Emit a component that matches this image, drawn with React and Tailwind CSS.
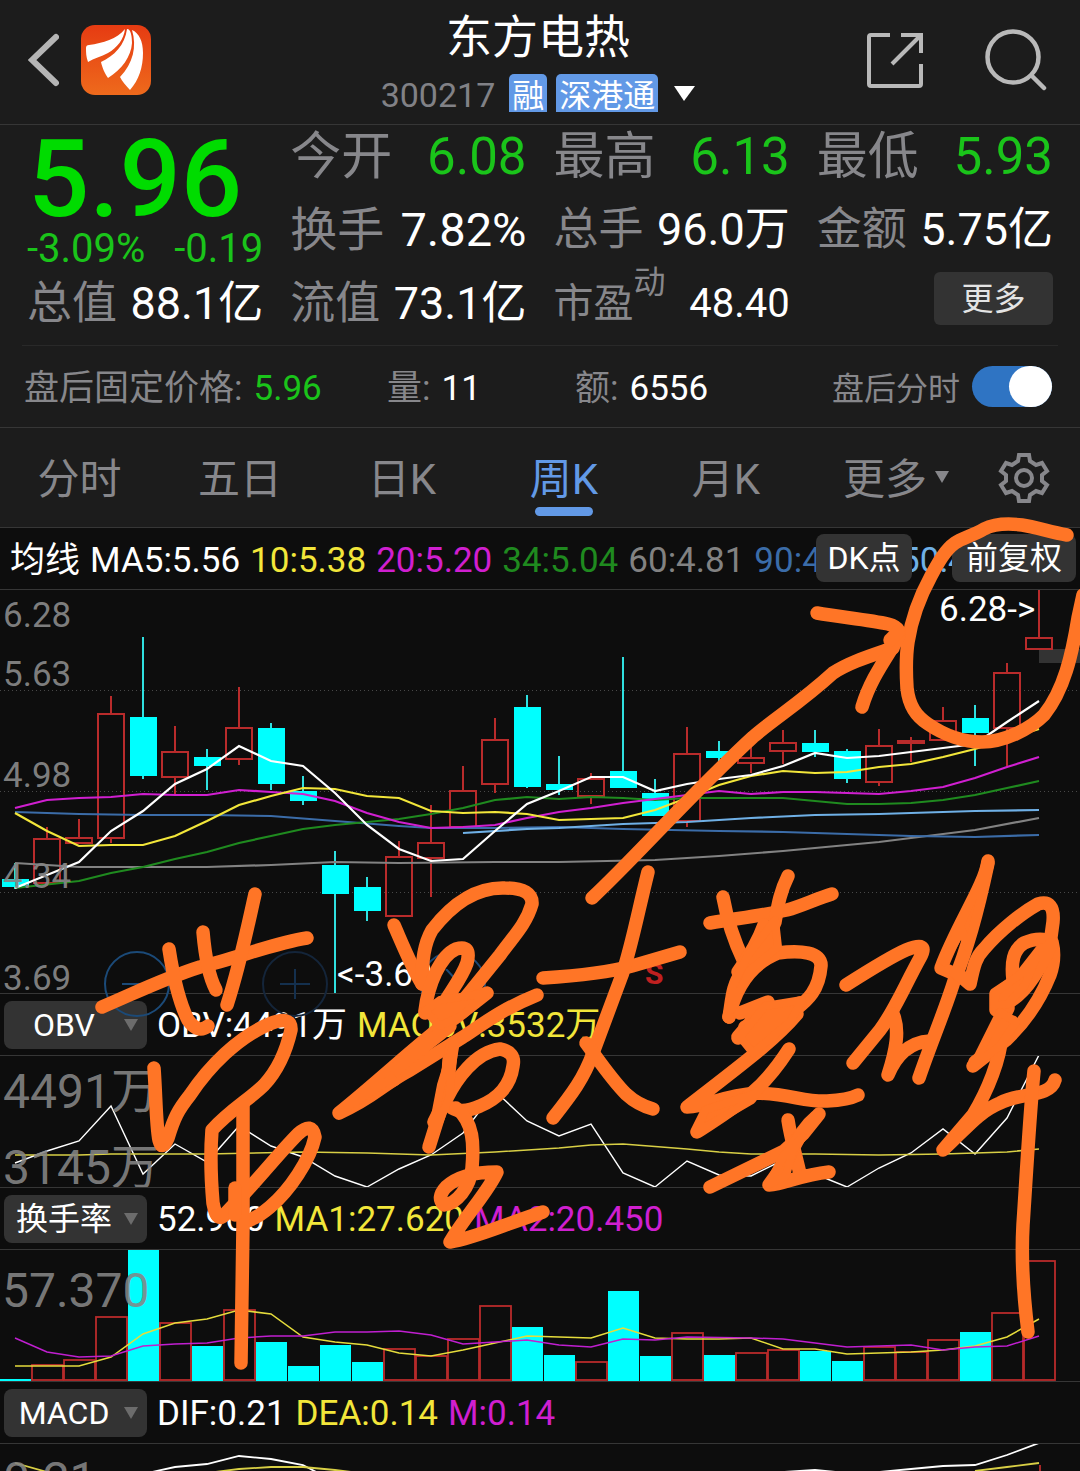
import React, { useState } from 'react';

const RED = '#b92b2b';
const CYAN = '#00ffff';

// [type, body top, body bottom, wick top, wick bottom]
const CANDLES = [
  ['d', 879, 887, 863, 889], ['u', 839, 883, 827, 886], ['u', 838, 843, 819, 843], ['u', 714, 838, 696, 843],
  ['d', 717, 776, 637, 779], ['u', 752, 777, 726, 795], ['d', 757, 766, 749, 790], ['u', 728, 759, 687, 765],
  ['d', 728, 784, 723, 790], ['d', 791, 801, 776, 805], ['d', 865, 894, 851, 993], ['d', 887, 911, 877, 921],
  ['u', 857, 916, 841, 916], ['u', 843, 858, 805, 897], ['u', 791, 827, 766, 827], ['u', 740, 784, 718, 793],
  ['d', 707, 787, 695, 788], ['d', 784, 790, 756, 795], ['u', 779, 796, 773, 804], ['d', 771, 788, 657, 788],
  ['d', 793, 816, 779, 816], ['u', 754, 821, 727, 827], ['d', 751, 758, 741, 762], ['u', 758, 763, 747, 773],
  ['u', 743, 751, 730, 764], ['d', 743, 752, 730, 757], ['d', 751, 779, 749, 783], ['u', 746, 782, 729, 786],
  ['u', 741, 743, 737, 762], ['u', 721, 740, 707, 740], ['d', 718, 733, 705, 766], ['u', 673, 728, 663, 766],
  ['u', 638, 649, 589, 649],
];

const MA_LINES = [
  { color: '#828282', points: '15,863 79,867 207,867 271,865 335,862 399,863 495,862 559,862 655,860 719,856 783,851 815,848 879,842 975,830 1039,818' },
  { color: '#3b6ca8', points: '15,812 79,814 143,815 207,815 271,816 335,821 399,826 431,828 495,828 559,827 623,829 719,831 783,832 847,834 911,836 975,837 1039,835' },
  { color: '#6fb0e6', points: '463,833 527,829 559,828 623,824 687,822 719,820 751,818 815,815 879,814 975,811 1039,810' },
  { color: '#1f8a1f', points: '15,888 79,881 111,873 143,867 175,859 207,852 239,843 271,836 303,829 335,825 367,822 399,819 431,814 463,808 495,800 527,797 559,799 591,797 623,798 655,800 687,798 783,798 847,804 879,804 911,803 943,800 975,795 1007,788 1039,781' },
  { color: '#d01fd0', points: '15,808 47,800 79,798 111,797 143,794 175,795 207,795 239,790 271,792 303,794 335,801 367,813 399,822 431,828 463,827 495,825 527,818 559,812 591,808 623,803 655,799 687,795 719,791 751,794 783,792 815,792 847,793 879,794 911,791 943,787 975,778 1007,767 1039,757' },
  { color: '#f2e63a', points: '15,813 47,831 79,846 111,845 143,845 175,836 207,821 239,805 271,796 303,788 335,789 367,796 399,798 431,811 463,813 495,812 527,814 559,820 591,819 623,818 655,810 687,798 719,785 751,776 783,771 815,773 847,772 879,767 911,764 943,757 975,749 1007,739 1039,729' },
  { color: '#ffffff', points: '15,888 47,875 79,862 111,831 143,811 175,784 207,769 239,746 271,761 303,766 335,793 367,825 399,849 431,861 463,859 495,831 527,804 559,791 591,777 623,777 655,791 687,784 719,779 751,775 783,766 815,753 847,758 879,756 911,752 943,748 975,744 1007,722 1039,701' },
];

// [type, top]
const TURNOVER = [
  ['d', 1379], ['u', 1365], ['u', 1360], ['u', 1317], ['d', 1250], ['u', 1323], ['d', 1346], ['u', 1310], ['d', 1342],
  ['d', 1366], ['d', 1345], ['d', 1362], ['u', 1349], ['u', 1356], ['u', 1339], ['u', 1306], ['d', 1327], ['d', 1355],
  ['u', 1362], ['d', 1291], ['d', 1356], ['u', 1333], ['d', 1355], ['u', 1353], ['u', 1350], ['d', 1351], ['d', 1361],
  ['u', 1347], ['u', 1352], ['u', 1340], ['d', 1332], ['u', 1313], ['u', 1261],
];

const INK = [
  // circle round the latest candle
  'M1067 535 C1050 532 1036 527 1022 525 C1006 523 994 524 984 529 C972 536 962 538 955 543 C945 550 938 563 931 576 C919 598 911 622 908 642 C906 655 906 672 907 688 C909 706 916 716 928 724 C944 735 964 742 982 742 C1004 742 1030 729 1044 715 C1064 690 1072 655 1078 618 L1083 595',
  // arrow
  'M592 898 C635 858 690 795 753 737 C775 718 800 703 833 673 C850 662 870 656 893 648',
  'M817 613 C840 617 870 620 888 624 Q904 628 897 640 C885 660 870 680 862 707',
  'M890 640 L898 632',
  // 带
  'M102 1007 C135 993 165 978 200 967 C240 957 275 943 307 938',
  'M169 949 C173 975 178 1000 188 1020 Q198 1034 208 1026',
  'M203 932 C205 955 209 977 216 990',
  'M255 894 C248 925 240 965 227 1005',
  'M154 1068 C156 1095 156 1125 159 1140 Q162 1152 168 1138 C174 1118 178 1110 190 1095 C210 1065 238 1038 267 1025 Q292 1014 291 1030 C286 1052 278 1070 264 1085 C250 1099 230 1110 212 1130 C210 1155 211 1180 213 1203 Q217 1226 227 1212 L243 1195 C262 1175 280 1152 298 1134 Q312 1121 315 1137 C310 1160 290 1190 270 1207 Q256 1219 244 1222',
  'M243 1104 L243 1225 L241 1363',
  'M235 1188 L235 1215',
  // 量
  'M394 925 C404 948 412 968 422 984',
  'M422 984 C422 960 424 944 432 930 C452 904 476 887 505 888 Q533 888 532 904 C526 925 512 938 500 955 L462 1002',
  'M425 1011 C428 985 440 956 456 949 Q472 944 467 963 C462 978 448 995 440 1010',
  'M425 1013 L445 1008 L487 993 L455 1018 L440 1026',
  'M440 1022 L463 1008',
  'M450 1020 C420 1042 380 1080 339 1113 C375 1097 380 1086 410 1070 L463 1037 C490 1019 505 1008 537 995',
  'M450 1026 C420 1050 390 1072 360 1098 L395 1079',
  'M453 1043 C448 1070 446 1090 439 1115 L429 1147',
  'M449 1060 L447 1096 L434 1122',
  'M447 1098 C456 1080 475 1052 500 1049 Q516 1052 513 1066 C510 1088 495 1100 480 1106 Q462 1114 452 1108',
  'M456 1108 C474 1122 474 1145 472 1168 C470 1188 456 1204 444 1205 Q436 1198 446 1187 C460 1174 480 1172 497 1172 C488 1192 466 1215 450 1242 C475 1238 500 1226 543 1212',
  // 大
  'M543 978 C575 976 610 972 632 966 L680 952',
  'M648 872 C638 912 632 945 622 975 L593 1053 C584 1078 572 1094 553 1118',
  'M586 1043 C600 1062 612 1080 626 1094 Q638 1105 653 1109',
  // 墓
  'M710 923 C740 918 765 915 787 910 C802 906 818 898 832 894',
  'M723 897 C728 925 736 945 744 962',
  'M788 876 C780 892 778 905 775 922 C766 945 752 960 742 972 C732 985 732 1000 729 1017',
  'M764 925 C758 942 748 958 738 972',
  'M729 1017 C735 990 748 965 778 953 C800 950 822 952 821 966 C819 990 808 1000 795 1010',
  'M740 1013 L768 1002 L738 1037 L800 1003 L780 1028 L738 1038',
  'M745 1027 L795 1012',
  'M797 1014 C775 1040 745 1062 687 1107 C710 1106 720 1096 757 1093 C790 1094 805 1102 827 1101 Q848 1100 858 1095',
  'M789 1049 C778 1066 765 1082 752 1093 C735 1108 715 1120 697 1132 L707 1112 L735 1103',
  'M703 1122 L742 1100',
  'M788 1120 C791 1140 796 1155 800 1174',
  'M819 1114 L803 1134 L784 1151 L710 1187',
  'M816 1117 C800 1130 796 1145 787 1160 L769 1185 C785 1184 800 1175 829 1172',
  // 碑
  'M846 985 C868 971 890 957 906 950 Q930 940 920 958 C905 985 895 1010 880 1030 L853 1063',
  'M893 1014 C900 1030 896 1050 888 1075 C895 1058 908 1042 930 1041',
  'M988 861 C985 885 957 925 941 968 L955 974',
  'M988 863 C978 910 965 955 955 978 C946 1008 932 1040 919 1078',
  'M956 972 L970 984 C974 965 976 957 984 949 C1000 930 1022 913 1038 904 Q1055 899 1053 922 L1050 944',
  'M1013 980 C1011 962 1013 950 1024 943 Q1040 936 1052 942 Q1056 958 1050 975 C1040 1000 1025 1022 1006 1040 L973 1066',
  'M1051 945 C1040 968 1028 990 1012 1000 L996 1010 L996 994 L1020 978 L1042 950',
  'M1000 998 L1022 985',
  'M1008 1008 L985 1055 L975 1062 L1000 1044 L1012 1022',
  'M1002 1035 C1000 1060 988 1090 973 1115 L943 1150 C965 1130 978 1112 1000 1103 C1020 1092 1050 1098 1055 1080',
  'M1034 1071 C1030 1110 1026 1180 1023 1225 C1021 1260 1024 1300 1028 1332',
];

// places where the pen went over itself until they were solid
const INK_BLOBS = [
  'M425 1011 L440 1000 L487 993 L463 1015 L440 1026 Z',
  'M339 1113 L385 1072 L392 1078 Z',
  'M455 1040 L449 1098 L429 1147 L441 1085 Z',
  'M775 920 L748 955 L733 985 L731 1010 L750 970 L778 947 Z',
  'M740 1037 L765 1006 L802 1000 L790 1022 L753 1053 Z',
  'M757 1093 L789 1049 L752 1100 L697 1132 L705 1110 Z',
  'M803 1137 L784 1155 L768 1185 L786 1176 L793 1150 Z',
  'M988 863 L984 885 L968 948 L962 930 L944 962 Z',
  'M994 1006 L996 992 L1022 973 L1036 958 L1025 985 L1008 1004 Z',
  'M973 1066 L1000 1012 L1016 1022 L1000 1046 Z',
];

const TABS = ['分时', '五日', '日K', '周K', '月K'];

function Label({ children, className = '' }) {
  return <span className={`text-[#87878b] ${className}`}>{children}</span>;
}

function Quote({ label, value, color = 'text-white', className }) {
  return <div className={`flex items-baseline justify-between whitespace-nowrap ${className}`}>
      <Label>{label}</Label>
      <span className={color}>{value}</span>
    </div>;
}

function Header() {
  return <header className="flex h-[125px] items-center justify-between border-b border-[#363636] pl-7 pr-8">
      <div className="flex flex-1 items-center gap-[22px] pb-1">
        <button aria-label="返回">
          <svg className="block" width="31" height="54" viewBox="28 33 31 54" fill="none" stroke="#b5b5b5" strokeWidth="6" strokeLinecap="round"><path d="M56 37 L32 60 L56 83" /></svg>
        </button>
        <a href="#home" aria-label="首页">
          <svg className="block" width="70" height="70" viewBox="0 0 70 70">
            <defs>
              <linearGradient id="logo" x1="0" y1="0" x2="0" y2="1">
                <stop offset="0" stopColor="#e63b12" />
                <stop offset="1" stopColor="#ee6a1c" />
              </linearGradient>
            </defs>
            <rect width="70" height="70" rx="14" fill="url(#logo)" />
            <g fill="#fff">
              <path d="M5 23 Q5 20 8 20 C22 18 36 14 44 4 C43 14 36 23 27 28 C20 32 13 33 7 37 C5 32 5 27 5 23 Z" />
              <path d="M46 4 C50 4 51 12 51 18 C50 32 41 44 27 53 C24 49 21 42 20 37 C33 31 44 20 46 4 Z" />
              <path d="M51 5 C58 8 62 16 62 28 C62 42 58 55 49 65 C45 61 41 56 39 52 C52 38 56 22 51 5 Z" />
            </g>
          </svg>
        </a>
      </div>
      <div className="flex flex-col items-center">
        <h1 className="text-[46px] leading-[62px] text-white">东方电热</h1>
        <div className="flex items-center pb-1 pt-1 text-[34px] leading-[38px] text-[#818186]">
          <span className="pr-[14px] pt-1">300217</span>
          <span className="mr-[9px] h-[38px] rounded-t-[5px] bg-[#6299e6] px-[3px] text-[32px] leading-[44px] text-white">融</span>
          <span className="mr-4 h-[38px] rounded-t-[5px] bg-[#6299e6] px-[3px] text-[32px] leading-[44px] text-white">深港通</span>
          <svg width="21" height="15" viewBox="0 0 21 15" fill="#fff"><path d="M0 0 H21 L10 15 Z" /></svg>
        </div>
      </div>
      <div className="flex flex-1 items-center justify-end gap-[60px] pb-1">
        <button aria-label="分享">
          <svg className="block" width="58" height="58" viewBox="865 31 58 58" fill="none" stroke="#b9b9b9" strokeWidth="4">
            <path d="M889 35 H870 Q868 35 868 37 V84 Q868 86 870 86 H918 Q920 86 920 84 V64" />
            <path d="M900 35 H920 V53" />
            <path d="M920 35 L891 64" />
          </svg>
        </button>
        <button aria-label="搜索">
          <svg className="block" width="64" height="62" viewBox="983 29 64 62" fill="none" stroke="#b9b9b9" strokeWidth="4.5" strokeLinecap="round">
            <circle cx="1012" cy="57" r="25.5" />
            <path d="M1031 76 L1043 88" />
          </svg>
        </button>
      </div>
    </header>;
}

function QuoteBoard() {
  const green = 'text-[#1ac41a]';
  return <section className="grid grid-cols-4 gap-x-[27px] px-[27px] pb-3">
      <div>
        <div className="pr-5 text-center text-[108px] font-medium leading-[109px] text-[#00dc00]">5.96</div>
        <div className={`flex justify-between pb-2 text-[40px] leading-[30px] ${green}`}>
          <span>-3.09%</span>
          <span>-0.19</span>
        </div>
        <Quote label="总值" value="88.1亿" className="h-[61px] text-[45px] leading-[63px]" />
      </div>
      <div>
        <Quote label="今开" value="6.08" color={green} className="text-[51px] leading-[63px]" />
        <Quote label="换手" value="7.82%" className="text-[47px] leading-[84px]" />
        <Quote label="流值" value="73.1亿" className="h-[61px] text-[45px] leading-[63px]" />
      </div>
      <div>
        <Quote label="最高" value="6.13" color={green} className="text-[51px] leading-[63px]" />
        <Quote label="总手" value="96.0万" className="text-[45px] leading-[84px]" />
        <div className="flex h-[61px] items-baseline justify-between text-[40px] leading-[64px]">
          <Label>市盈<sup className="-top-6 text-[32px] leading-none">动</sup></Label>
          <span className="text-white">48.40</span>
        </div>
      </div>
      <div>
        <Quote label="最低" value="5.93" color={green} className="text-[51px] leading-[63px]" />
        <Quote label="金额" value="5.75亿" className="text-[45px] leading-[84px]" />
        <button className="ml-auto block h-[53px] w-[119px] rounded-md bg-[#333333] text-[32px] leading-none text-[#e4e4e4]">更多</button>
      </div>
    </section>;
}

function AfterHours() {
  const [on, setOn] = useState(true);
  return <section className="grid h-[82px] grid-cols-[363fr_188fr_257fr_220fr] items-center whitespace-nowrap border-b border-[#363636] pl-6 pr-7 text-[35px]">
      <div className="flex gap-[11px] pt-1.5"><Label>盘后固定价格:</Label><span className="text-[#1ac41a]">5.96</span></div>
      <div className="flex gap-[11px] pt-1.5"><Label>量:</Label><span className="text-white">11</span></div>
      <div className="flex gap-[11px] pt-1.5"><Label>额:</Label><span className="text-white">6556</span></div>
      <label className="flex items-center justify-end gap-3 text-[32px]">
        <Label className="pt-1">盘后分时</Label>
        <span className="relative block h-[41px] w-20">
          <input type="checkbox" role="switch" checked={on} onChange={() => setOn(!on)} className="peer block h-full w-full appearance-none rounded-full bg-[#555] checked:bg-[#2f74c3]" />
          <span className="pointer-events-none absolute left-0 top-0 h-[41px] w-[43px] rounded-full bg-white peer-checked:left-auto peer-checked:right-0" />
        </span>
      </label>
    </section>;
}

function Tabs() {
  const [tab, setTab] = useState('周K');
  return <nav className="grid h-[100px] grid-cols-[159fr_162fr_162fr_162fr_162fr_178fr_78fr] border-b border-[#363636] pr-[17px] text-[42px] text-[#87878b]">
      {TABS.map(name => <button key={name} onClick={() => setTab(name)} className={`flex flex-col items-center justify-end pb-[11px] leading-[54px] ${tab === name ? 'text-[#6299e6]' : ''}`}>
          {name}
          <span className={`h-[9px] w-[58px] rounded-full ${tab === name ? 'bg-[#6299e6]' : ''}`} />
        </button>)}
      <button className="flex items-end justify-center gap-2 pb-5 leading-[54px]">
        更多
        <svg className="mb-6" width="14" height="12" viewBox="0 0 14 12" fill="#87878b"><path d="M0 0 H14 L7 12 Z" /></svg>
      </button>
      <button aria-label="设置" className="flex items-center justify-center">
        <svg width="52" height="52" viewBox="-26 -26 52 52" fill="none" stroke="#87878b" strokeWidth="4" strokeLinejoin="miter">
          <path d="M-5 -23 H5 L6 -17 L12 -13 L18 -15 L23 -7 L18 -3 V3 L23 7 L18 15 L12 13 L6 17 L5 23 H-5 L-6 17 L-12 13 L-18 15 L-23 7 L-18 3 V-3 L-23 -7 L-18 -15 L-12 -13 L-6 -17 Z" />
          <circle r="8" />
        </svg>
      </button>
    </nav>;
}

function MaLegend() {
  return <div className="relative flex h-[62px] items-center gap-[10px] overflow-hidden whitespace-nowrap border-b border-[#363636] pl-[10px] pt-1.5 text-[35px]">
      <span className="text-white">均线</span>
      <span className="text-white">MA5:5.56</span>
      <span className="text-[#f2e63a]">10:5.38</span>
      <span className="text-[#d01fd0]">20:5.20</span>
      <span className="text-[#1f8a1f]">34:5.04</span>
      <span className="text-[#828282]">60:4.81</span>
      <span className="text-[#3b6ca8]">90:4.70</span>
      <span className="text-[#6fb0e6]">150:4.86</span>
      <div className="absolute right-1 top-1.5 flex gap-10 text-[32px] leading-none text-white">
        <button className="h-12 w-24 rounded-lg bg-[#333333]">DK点</button>
        <button className="h-12 w-[124px] rounded-lg bg-[#333333]">前复权</button>
      </div>
    </div>;
}

function KLineChart() {
  return <section className="relative border-b border-[#363636]">
      <svg className="block w-full" viewBox="0 590 1080 403">
        {[690, 791, 892].map(y => <path key={y} d={`M0 ${y + 0.5} H1080`} stroke="#484848" strokeDasharray="1 3" />)}
        <rect x="1039" y="649" width="41" height="14" fill="#333333" />
        {CANDLES.map(([type, top, bottom, high, low], i) => {
        const x = 15 + i * 32;
        if (type === 'd') {
          return <g key={i}>
              <path d={`M${x} ${high} V${low}`} stroke="#2fe0e0" strokeWidth="2" />
              <rect x={x - 13} y={top} width="27" height={bottom - top} fill={CYAN} />
            </g>;
        }
        return <g key={i} fill="none" stroke={RED} strokeWidth="2">
            <path d={`M${x} ${high} V${top} M${x} ${bottom} V${low}`} />
            <rect x={x - 13} y={top} width="26" height={bottom - top} />
          </g>;
      })}
        {MA_LINES.map(line => <polyline key={line.color} points={line.points} fill="none" stroke={line.color} strokeWidth="2.2" />)}
        <g fontSize="35" fill="#858585" fillOpacity="0.95">
          <text x="3" y="627">6.28</text>
          <text x="3" y="686">5.63</text>
          <text x="3" y="787">4.98</text>
          <text x="3" y="888">4.34</text>
          <text x="3" y="990">3.69</text>
        </g>
        <g fontSize="35" fill="#fff">
          <text x="939" y="621">6.28-&gt;</text>
          <text x="337" y="986">&lt;-3.69</text>
        </g>
        <text x="645" y="984" fontSize="30" fontWeight="700" fill="#c02020">S</text>
      </svg>
      <div className="absolute -bottom-6 left-[104px] z-10 flex gap-[92px]">
        <button aria-label="缩小" className="flex h-[66px] w-[66px] items-center justify-center rounded-full border-2 border-[#1b4a78]">
          <svg width="30" height="30" viewBox="0 0 30 30" stroke="#1b4a78" strokeWidth="2"><path d="M0 15 H30" /></svg>
        </button>
        <button aria-label="放大" className="flex h-[66px] w-[66px] items-center justify-center rounded-full border-2 border-[#14253a]">
          <svg width="30" height="30" viewBox="0 0 30 30" stroke="#14304e" strokeWidth="2"><path d="M0 15 H30 M15 0 V30" /></svg>
        </button>
        <button aria-label="后移" className="flex h-[66px] w-[66px] items-center justify-center rounded-full border-2 border-[#1b4a78]">
          <svg width="30" height="30" viewBox="0 0 30 30" fill="none" stroke="#1b4a78" strokeWidth="2"><path d="M8 0 L22 15 L8 30" /></svg>
        </button>
      </div>
    </section>;
}

function IndicatorBar({ name, items }) {
  return <div className="flex h-[62px] items-center gap-[10px] whitespace-nowrap border-b border-[#363636] pl-1 text-[35px]">
      <div className="relative">
        <select aria-label="指标" defaultValue={name} className="block h-12 w-[143px] appearance-none rounded-lg bg-[#333333] pr-[23px] text-center text-[32px] leading-none text-white">
          <option>{name}</option>
        </select>
        <svg className="pointer-events-none absolute right-[9px] top-[18px]" width="14" height="12" viewBox="0 0 14 12" fill="#6c6c6c"><path d="M0 0 H14 L7 12 Z" /></svg>
      </div>
      {items.map(([text, color]) => <span key={text} className={`pt-1 ${color}`}>{text}</span>)}
    </div>;
}

function ObvChart() {
  return <svg className="block w-full border-b border-[#363636]" viewBox="0 1056 1080 131">
      <polyline points="15,1163 47,1151 79,1141 111,1106 143,1174 175,1144 207,1162 239,1126 271,1146 303,1157 335,1176 367,1187 399,1169 431,1155 463,1133 495,1091 527,1121 559,1136 591,1124 623,1173 655,1187 687,1161 719,1175 751,1176 783,1160 815,1174 847,1187 879,1168 911,1153 943,1129 975,1154 1007,1118 1039,1055" fill="none" stroke="#fff" strokeWidth="1.4" />
      <polyline points="15,1155 79,1155 111,1154 207,1154 303,1152 367,1153 431,1155 495,1152 559,1148 591,1145 623,1144 687,1149 719,1152 751,1154 815,1154 879,1155 943,1154 1007,1152 1039,1149" fill="none" stroke="#d8cf45" strokeWidth="1.6" />
      <g fontSize="48" fill="#858585" fillOpacity="0.9">
        <text x="3" y="1108">4491万</text>
        <text x="3" y="1184">3145万</text>
      </g>
    </svg>;
}

function TurnoverChart() {
  return <svg className="block w-full border-b border-[#363636]" viewBox="0 1250 1080 131">
      {TURNOVER.map(([type, top], i) => type === 'd' ?
      <rect key={i} x={i * 32} y={top} width="31" height={1381 - top} fill={CYAN} /> :
      <rect key={i} x={i * 32} y={top} width="31" height={1380 - top} fill="none" stroke={RED} strokeWidth="1.8" />)}
      <polyline points="15,1366 79,1366 111,1357 143,1334 175,1323 207,1319 239,1310 271,1314 303,1337 335,1342 367,1345 399,1353 431,1356 463,1350 495,1343 527,1336 559,1337 591,1338 623,1328 655,1338 687,1339 719,1339 751,1338 783,1349 815,1349 847,1354 879,1353 911,1352 943,1350 975,1346 1007,1337 1039,1319" fill="none" stroke="#e5dc3c" strokeWidth="1.5" />
      <polyline points="15,1338 47,1352 79,1357 111,1356 143,1346 175,1344 207,1343 239,1338 271,1336 303,1336 335,1332 367,1332 399,1331 431,1335 463,1344 495,1342 527,1340 559,1345 591,1347 623,1339 655,1340 687,1337 751,1338 783,1339 815,1343 847,1347 911,1345 943,1350 975,1347 1007,1346 1039,1336" fill="none" stroke="#c01fd0" strokeWidth="1.5" />
      <text x="2" y="1307" fontSize="48" fill="#858585" fillOpacity="0.9">57.370</text>
    </svg>;
}

function MacdChart() {
  return <svg className="block w-full" viewBox="0 1444 1080 27">
      <g fill="none" strokeWidth="1.8">
        <g stroke="#fff">
          <polyline points="143,1474 175,1467 207,1464 239,1456 271,1459 303,1465 320,1474" />
          <polyline points="783,1472 815,1470 847,1473 879,1472 911,1469 943,1466 975,1465 1007,1455 1039,1443" />
        </g>
        <g stroke="#d8cf45">
          <polyline points="15,1463 47,1472" />
          <polyline points="207,1473 239,1469 271,1467 303,1467 335,1470 360,1473" />
          <polyline points="975,1471 1007,1467 1039,1463" />
        </g>
        <path d="M1040 1465 V1471" stroke={RED} />
      </g>
      <text x="3" y="1496" fontSize="48" fill="#858585" fillOpacity="0.9">0.21</text>
    </svg>;
}

export default function App() {
  const yellow = 'text-[#f2e63a]';
  const magenta = 'text-[#d01fd0]';
  return <main className="relative overflow-hidden bg-[#0d0d0d] font-['Roboto','Noto_Sans_CJK_SC',sans-serif]">
      <div className="bg-[#1c1c1c]">
        <Header />
        <QuoteBoard />
        <hr className="mx-[22px] border-[#292929]" />
        <AfterHours />
        <Tabs />
      </div>
      <MaLegend />
      <KLineChart />
      <IndicatorBar name="OBV" items={[['OBV:4491万', 'text-white'], ['MAOBV:3532万', yellow]]} />
      <ObvChart />
      <IndicatorBar name="换手率" items={[['52.960', 'text-white'], ['MA1:27.620', yellow], ['MA2:20.450', magenta]]} />
      <TurnoverChart />
      <IndicatorBar name="MACD" items={[['DIF:0.21', 'text-white'], ['DEA:0.14', yellow], ['M:0.14', magenta]]} />
      <MacdChart />
      <svg className="pointer-events-none absolute left-0 top-0 z-20 w-full" viewBox="0 0 1080 1471" fill="none" stroke="#ff7526" strokeWidth="13.5" strokeLinecap="round" strokeLinejoin="round" aria-hidden="true">
        {INK.map(d => <path key={d} d={d} />)}
        {INK_BLOBS.map(d => <path key={d} d={d} fill="#ff7526" strokeWidth="8" />)}
      </svg>
    </main>;
}
